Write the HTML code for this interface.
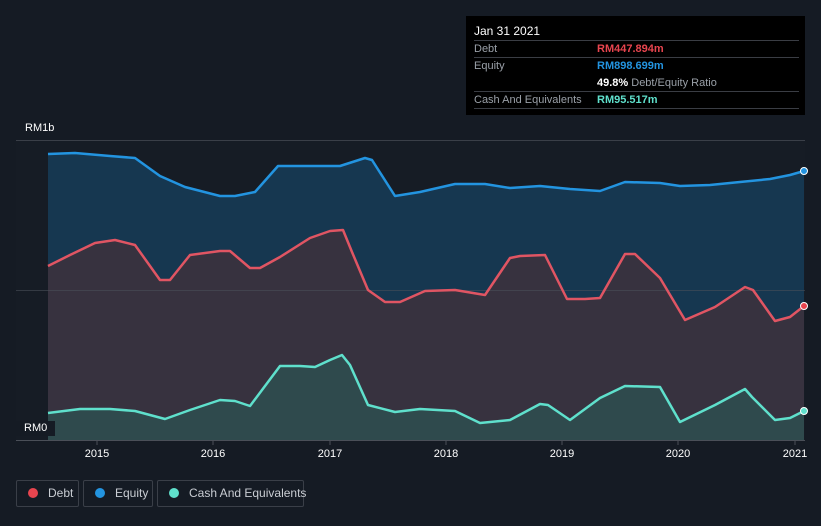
<!DOCTYPE html><html><head><style>
body{margin:0;width:821px;height:526px;background:#151b24;font-family:"Liberation Sans",sans-serif;overflow:hidden;position:relative}
.t{position:absolute;color:#fff;font-size:11px}
.tip{position:absolute;left:466px;top:16px;width:339px;height:99px;background:#000;font-size:11px}
.row{position:absolute;left:8px;right:6px;border-top:1px solid #3a3d44;height:17px}
.l{position:absolute;left:0;top:2px;color:#9aa0a8}.v{position:absolute;left:123px;top:2px;font-weight:bold}
.lg{position:absolute;top:480px;height:27px;border:1px solid #3a3f48;border-radius:2px;color:#c9cdd3;font-size:12px;box-sizing:border-box;line-height:25px;white-space:nowrap}
.lg i{display:inline-block;width:10px;height:10px;border-radius:50%;margin:0 10px 0 11px;vertical-align:-1px}
</style></head><body>
<svg width="821" height="526" style="position:absolute;left:0;top:0">
<defs>
<path id="eq" d="M48,154 L75,153 110,156 135,158 160,176 185,187 220,196 235,196 255,192 278,166 300,166 340,166 365,158 372,160 395,196 420,192 455,184 485,184 510,188 540,186 570,189 600,191 625,182 660,183 680,186 710,185 740,182 770,179 790,175 804,171"/>
<path id="db" d="M48,266 L70,255 95,243 115,240 135,245 160,280 170,280 190,255 220,251 230,251 250,268 260,268 280,257 310,238 330,231 343,230 352,252 368,290 385,302 400,302 425,291 455,290 485,295 510,258 520,256 545,255 567,299 585,299 600,298 625,254 635,254 660,278 685,320 715,307 745,287 753,290 775,321 790,317 804,306"/>
<path id="ca" d="M48,413 L80,409 110,409 135,411 165,419 190,410 220,400 235,401 250,406 280,366 300,366 315,367 330,360 342,355 350,365 368,405 395,412 420,409 455,411 480,423 510,420 540,404 548,405 570,420 600,398 625,386 660,387 680,422 715,405 745,389 752,397 775,420 790,418 804,411"/>
</defs>
<rect x="16" y="140" width="789" height="300" fill="#161c25"/>
<path d="M48,154 L75,153 110,156 135,158 160,176 185,187 220,196 235,196 255,192 278,166 300,166 340,166 365,158 372,160 395,196 420,192 455,184 485,184 510,188 540,186 570,189 600,191 625,182 660,183 680,186 710,185 740,182 770,179 790,175 804,171 L804,440 48,440Z" fill="#163750"/>
<path d="M48,266 L70,255 95,243 115,240 135,245 160,280 170,280 190,255 220,251 230,251 250,268 260,268 280,257 310,238 330,231 343,230 352,252 368,290 385,302 400,302 425,291 455,290 485,295 510,258 520,256 545,255 567,299 585,299 600,298 625,254 635,254 660,278 685,320 715,307 745,287 753,290 775,321 790,317 804,306 L804,440 48,440Z" fill="#37323f"/>
<path d="M48,413 L80,409 110,409 135,411 165,419 190,410 220,400 235,401 250,406 280,366 300,366 315,367 330,360 342,355 350,365 368,405 395,412 420,409 455,411 480,423 510,420 540,404 548,405 570,420 600,398 625,386 660,387 680,422 715,405 745,389 752,397 775,420 790,418 804,411 L804,440 48,440Z" fill="#2f4a4d"/>
<line x1="16" y1="140.5" x2="805" y2="140.5" stroke="#3a3f48"/>
<line x1="16" y1="290.5" x2="805" y2="290.5" stroke="#4a4f58" stroke-opacity=".6"/>
<line x1="16" y1="440.5" x2="805" y2="440.5" stroke="#4a4f58"/>
<g fill="none" stroke-width="2.5" stroke-linejoin="round">
<use href="#eq" stroke="#2394e0"/>
<use href="#db" stroke="#e05563"/>
<use href="#ca" stroke="#5fe0cc"/>
</g>
<circle cx="804" cy="171" r="3.5" fill="#2394e0" stroke="#fff"/>
<circle cx="804" cy="306" r="3.5" fill="#e8454f" stroke="#fff"/>
<circle cx="804" cy="411" r="3.5" fill="#5fe0cc" stroke="#fff"/>
<g stroke="#4a4f58"><line x1="97" y1="441" x2="97" y2="445"/><line x1="213" y1="441" x2="213" y2="445"/><line x1="330" y1="441" x2="330" y2="445"/><line x1="446" y1="441" x2="446" y2="445"/><line x1="562" y1="441" x2="562" y2="445"/><line x1="678" y1="441" x2="678" y2="445"/><line x1="795" y1="441" x2="795" y2="445"/></g>
<g fill="#fff" font-size="11" text-anchor="middle" font-family="Liberation Sans"><text x="97" y="457">2015</text><text x="213" y="457">2016</text><text x="330" y="457">2017</text><text x="446" y="457">2018</text><text x="562" y="457">2019</text><text x="678" y="457">2020</text><text x="795" y="457">2021</text></g>
</svg>
<div class="t" style="left:25px;top:122px">RM1b</div>
<div class="t" style="left:16px;top:421px;background:#151b24;padding:1px 8px 2px 8px">RM0</div>
<div class="tip">
<div style="position:absolute;left:8px;top:8px;color:#fff;font-size:12px">Jan 31 2021</div>
<div class="row" style="top:24px"><span class="l">Debt</span><span class="v" style="color:#e8454f">RM447.894m</span></div>
<div class="row" style="top:41px;height:34px"><span class="l">Equity</span><span class="v" style="color:#2394e0">RM898.699m</span><span class="v" style="top:19px;color:#fff">49.8% <span style="color:#9aa0a8;font-weight:normal">Debt/Equity Ratio</span></span></div>
<div class="row" style="top:75px"><span class="l">Cash And Equivalents</span><span class="v" style="color:#5fe0cc">RM95.517m</span></div>
<div class="row" style="top:92px;height:0"></div>
</div>
<div class="lg" style="left:16px;width:63px"><i style="background:#e8454f"></i>Debt</div>
<div class="lg" style="left:83px;width:70px"><i style="background:#2394e0"></i>Equity</div>
<div class="lg" style="left:157px;width:147px"><i style="background:#5fe0cc"></i>Cash And Equivalents</div>
</body></html>
